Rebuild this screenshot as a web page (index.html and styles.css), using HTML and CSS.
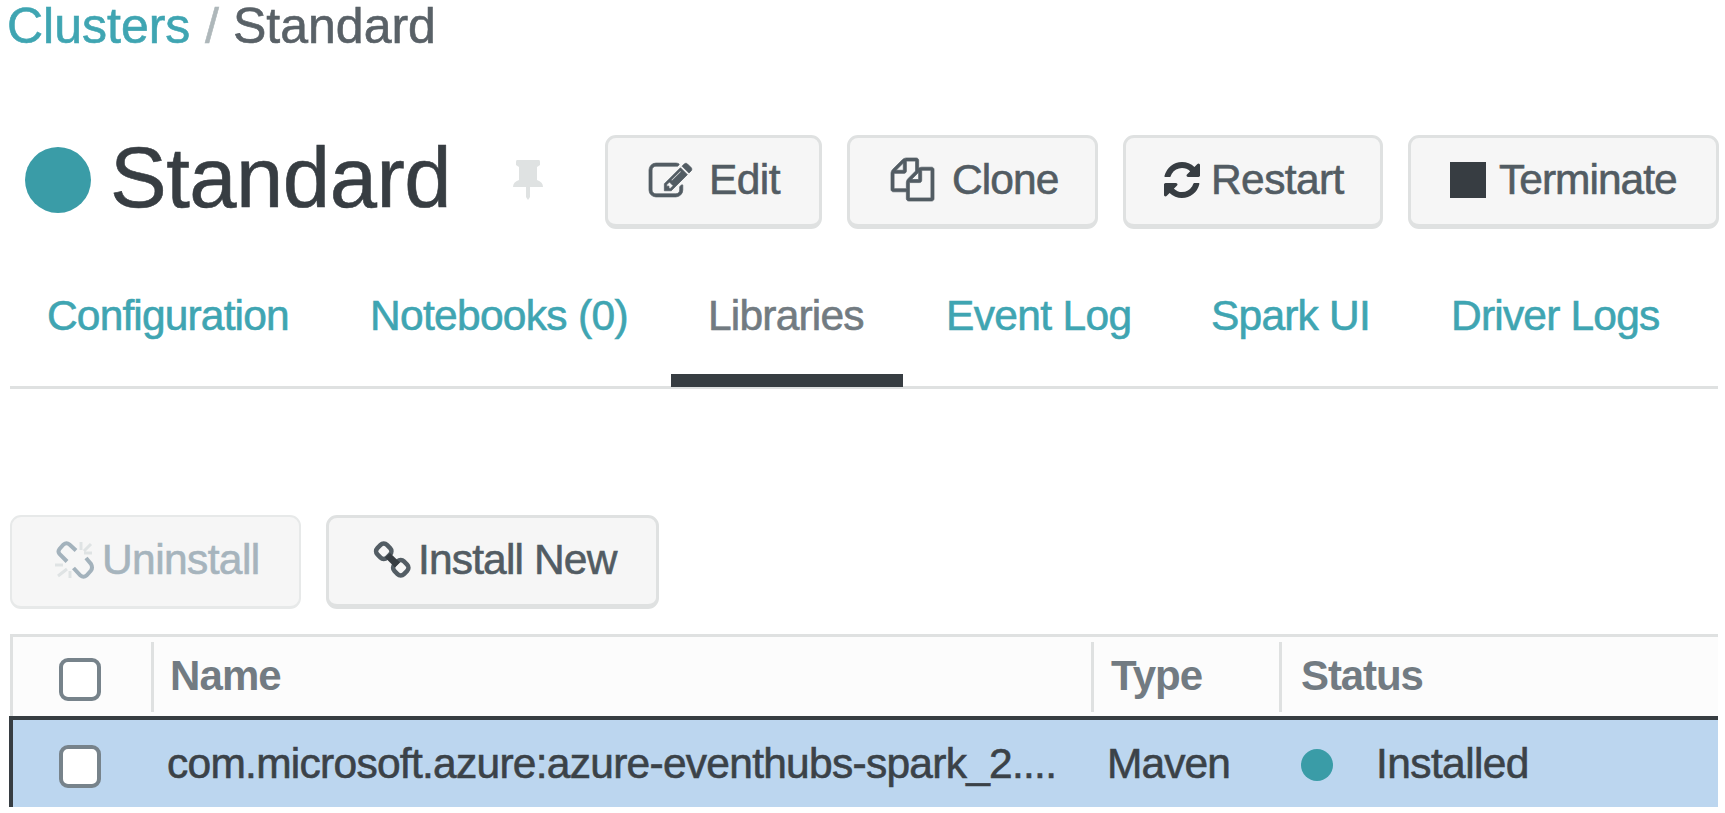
FILE: index.html
```html
<!DOCTYPE html>
<html lang="en">
<head>
<meta charset="utf-8">
<title>Clusters / Standard</title>
<link rel="stylesheet" href="styles.css">
</head>
<body>
<nav class="breadcrumb"><a class="crumb-link">Clusters</a><span class="slash">/</span><span>Standard</span></nav>

<header class="header">
  <span class="dot dot-large"></span>
  <h1 class="title">Standard</h1>
  <svg class="pin" viewBox="0 0 30 40"><path d="M4 0h22q1 0 1 2v3l-3 2v13q6 2 6 7H17v10l-2 3-2-3V27H0q0-5 6-7V7L3 5V2q0-2 1-2z"/></svg>
  <div class="actions">
    <button class="btn edit"><svg class="icon" width="43" height="34" viewBox="0 128 1792 1408"><path d="M888 1184l116-116-152-152-116 116v56h96v96h56zm440-720q-16-16-33 1l-350 350q-17 17-1 33t33-1l350-350q17-17 1-33zm80 594v190q0 119-84.500 203.500t-203.500 84.500h-832q-119 0-203.500-84.500t-84.500-203.500v-832q0-119 84.500-203.500t203.500-84.500h832q63 0 117 25 15 7 18 23 3 17-9 29l-49 49q-14 14-32 8-23-6-45-6h-832q-66 0-113 47t-47 113v832q0 66 47 113t113 47h832q66 0 113-47t47-113v-126q0-13 9-22l64-64q15-15 35-7t20 29zm-96-738l288 288-672 672h-288v-288zm444 132l-92 92-288-288 92-92q28-28 68-28t68 28l152 152q28 28 28 68t-28 68z"/></svg><span>Edit</span></button>
    <button class="btn clone"><svg class="icon" width="43" height="43" viewBox="0 0 1792 1792"><path d="M1696 384q40 0 68 28t28 68v1216q0 40-28 68t-68 28h-960q-40 0-68-28t-28-68v-288h-544q-40 0-68-28t-28-68v-672q0-40 20-88t48-76l408-408q28-28 76-48t88-20h416q40 0 68 28t28 68v328q68-40 128-40h416zm-544 213l-299 299h299v-299zm-640-384l-299 299h299v-299zm196 647l316-316v-416h-384v416q0 40-28 68t-68 28h-416v640h512v-256q0-40 20-88t48-76zm956 804v-1152h-384v416q0 40-28 68t-68 28h-416v640h896z"/></svg><span>Clone</span></button>
    <button class="btn restart"><svg class="icon" width="36" height="36" viewBox="128 128 1536 1536"><path d="M1639 1056q0 5-1 7-64 268-268 434.500t-478 166.500q-146 0-282.500-55t-243.500-157l-129 129q-19 19-45 19t-45-19-19-45v-448q0-26 19-45t45-19h448q26 0 45 19t19 45-19 45l-137 137q71 66 161 102t187 36q134 0 250-65t186-179q11-17 53-117 8-23 30-23h192q13 0 22.500 9.500t9.500 22.500zm25-800v448q0 26-19 45t-45 19h-448q-26 0-45-19t-19-45 19-45l138-138q-148-137-349-137-134 0-250 65t-186 179q-11 17-53 117-8 23-30 23h-199q-13 0-22.500-9.500t-9.500-22.500v-7q65-268 270-434.500t480-166.500q146 0 284 55.500t245 156.500l130-129q19-19 45-19t45 19 19 45z"/></svg><span>Restart</span></button>
    <button class="btn terminate"><span class="stop"></span><span>Terminate</span></button>
  </div>
</header>

<nav class="tabs">
  <a class="tab t-config">Configuration</a>
  <a class="tab t-notebooks">Notebooks (0)</a>
  <a class="tab t-libraries active">Libraries</a>
  <a class="tab t-event">Event Log</a>
  <a class="tab t-spark">Spark UI</a>
  <a class="tab t-driver">Driver Logs</a>
</nav>

<div class="toolbar">
  <button class="btn uninstall" disabled>
    <svg class="icon" width="40" height="40" viewBox="0 0 40 40"><g fill="none" stroke="#a3b2bc" stroke-width="4"><path d="M12 21.500L4.500 14Q2.500 11.500 4.500 9L8.500 4.500Q11.500 2 14.500 4.500L21 10.500"/><path d="M31 18L36 24Q38 27.500 36 30.500L31.500 35.500Q28.500 38 25.500 35.500L18.500 28"/></g><g fill="none" stroke="#dfe3e4" stroke-width="3"><path d="M26 2v8M36 4l-7 7M37 13h-8M0 25h8M12 29l-9 7M15 31v7"/></g></svg><span>Uninstall</span></button>
  <button class="btn install"><svg class="icon" width="39" height="40" viewBox="0 0 39 40"><g fill="none" stroke="#535d64" stroke-width="4.500"><rect x="4" y="4.500" width="13.500" height="13.500" rx="4.500" transform="rotate(45 10.750 11.250)"/><rect x="21" y="21" width="13.500" height="13.500" rx="4.500" transform="rotate(45 27.750 27.750)"/></g><path d="M12 17.500l5-4.500 10 9.500-5 5z" fill="#373d42"/></svg><span>Install New</span></button>
</div>

<section class="table">
  <div class="row head">
    <div class="cell c-check"><span class="checkbox"></span></div>
    <div class="cell c-name">Name</div>
    <div class="cell c-type">Type</div>
    <div class="cell c-status">Status</div>
  </div>
  <div class="row body">
    <div class="cell c-check"><span class="checkbox"></span></div>
    <div class="cell c-name"><span class="library">com.microsoft.azure:azure-eventhubs-spark_2....</span></div>
    <div class="cell c-type">Maven</div>
    <div class="cell c-status"><span class="dot dot-small"></span><span>Installed</span></div>
  </div>
</section>
</body>
</html>
```
FILE: styles.css
```css
* { box-sizing: border-box; }

body {
  margin: 0;
  width: 1725px;
  height: 813px;
  overflow: hidden;
  background: #fff;
  color: #42494f;
  font: 42.5px/48px "Liberation Sans", Arial, sans-serif;
  letter-spacing: -.6px;
  white-space: nowrap;
  -webkit-text-stroke: .6px currentColor;
}

.breadcrumb {
  display: flex;
  height: 135px;
  padding-left: 7px;
  font-size: 50px;
  line-height: 53px;
  letter-spacing: 0;
  color: #596167;
}
.crumb-link { width: 198px; color: #3fa5b2; }
.slash { width: 28px; color: #aeb7ba; }

.header { display: flex; height: 95px; padding-left: 25px; }
.dot { flex: none; border-radius: 50%; background: #3a9ca7; }
.dot-large { width: 66px; height: 66px; margin-top: 12px; }
.title {
  width: 403px;
  margin: 0 0 0 19px;
  font-size: 85px;
  font-weight: 400;
  line-height: 85px;
  letter-spacing: -.5px;
  color: #373d42;
}
.pin { flex: none; width: 30px; height: 40px; margin: 25px 0 0; fill: #dfe2e2; }
.actions { display: flex; gap: 25px; margin-left: 62px; }

.btn {
  display: flex;
  flex: none;
  align-items: center;
  height: 94px;
  margin: 0;
  padding: 0 0 3px;
  border: 3px solid #dfe1e1;
  border-bottom-width: 5px;
  border-radius: 11px;
  background: #f6f6f6;
  color: #525c63;
  font: inherit;
  letter-spacing: inherit;
}
.icon { flex: none; fill: currentColor; }
.edit { width: 217px; padding-left: 41px; }
.edit .icon { margin-right: 17px; }
.edit .icon, .clone .icon { overflow: visible; stroke: currentColor; stroke-width: 30; }
.clone { width: 251px; padding-left: 41px; letter-spacing: -.9px; }
.clone .icon { margin-right: 18px; }
.restart { width: 260px; padding-left: 38px; }
.restart .icon { margin-right: 11px; fill: #373d42; }
.terminate { width: 311px; padding-left: 39px; letter-spacing: -1px; }
.stop { width: 36px; height: 36px; margin-right: 13px; background: #373d42; }

.tabs {
  display: flex;
  height: 104px;
  margin: 55px 7px 0 10px;
  border-bottom: 3px solid #dfe1e1;
  line-height: 61px;
}
.tab { flex: none; height: 102px; color: #3fa5b2; }
.t-config { width: 325px; padding-left: 37px; letter-spacing: -.85px; }
.t-notebooks { width: 336px; padding-left: 35px; letter-spacing: -.7px; }
.t-libraries { width: 232px; padding-left: 37px; letter-spacing: -.8px; }
.t-event { width: 265px; padding-left: 43px; letter-spacing: -.65px; }
.t-spark { width: 241px; padding-left: 43px; letter-spacing: -.8px; }
.t-driver { padding-left: 42px; letter-spacing: -.8px; }
.active { border-bottom: 13px solid #373d42; color: #727b81; }

.toolbar { display: flex; gap: 25px; margin: 126px 0 0 10px; }
.uninstall { width: 291px; padding-left: 43px; border-color: #e7e9e9; border-width: 2px 2px 3px; color: #a6b4bd; }
.uninstall .icon { margin-right: 7px; }
.install { width: 333px; padding-left: 44px; letter-spacing: -.85px; }
.install .icon { margin-right: 6px; }

.table { width: 1709px; margin: 25px 0 0 9px; }
.row { display: flex; }
.head {
  height: 82px;
  padding: 5px 0 4px;
  margin-left: 1px;
  border-top: 3px solid #dfe1e1;
  border-left: 3px solid #dfe1e1;
  background: #fcfcfc;
  color: #727b82;
  font-size: 42px;
  font-weight: 700;
  letter-spacing: -.9px;
  -webkit-text-stroke: 0;
}
.head .cell { height: 70px; border-right: 3px solid #dfe1e1; padding-bottom: 2px; }
.head .c-status { border-right: 0; letter-spacing: -1.1px; }
.body {
  height: 91px;
  border-top: 4px solid #373d42;
  border-left: 4px solid #373d42;
  background: #bcd6ef;
  color: #3b4248;
}
.cell { display: flex; flex: none; align-items: center; }
.checkbox { width: 42px; height: 43px; border: 4px solid #77838b; border-radius: 9px; background: #fff; }
.c-check { width: 141px; padding-left: 46px; }
.head .c-check { padding-top: 6px; }
.body .c-check { padding-top: 5px; }
.c-name { width: 940px; padding-left: 16px; }
.c-type { width: 188px; padding-left: 17px; }
.c-status { padding-left: 19px; }
.body .c-name { padding-left: 13px; letter-spacing: -.73px; }
.body .c-type { padding-left: 13px; letter-spacing: -.9px; }
.dot-small { width: 32px; height: 32px; margin: 3px 43px 0 0; }
```
